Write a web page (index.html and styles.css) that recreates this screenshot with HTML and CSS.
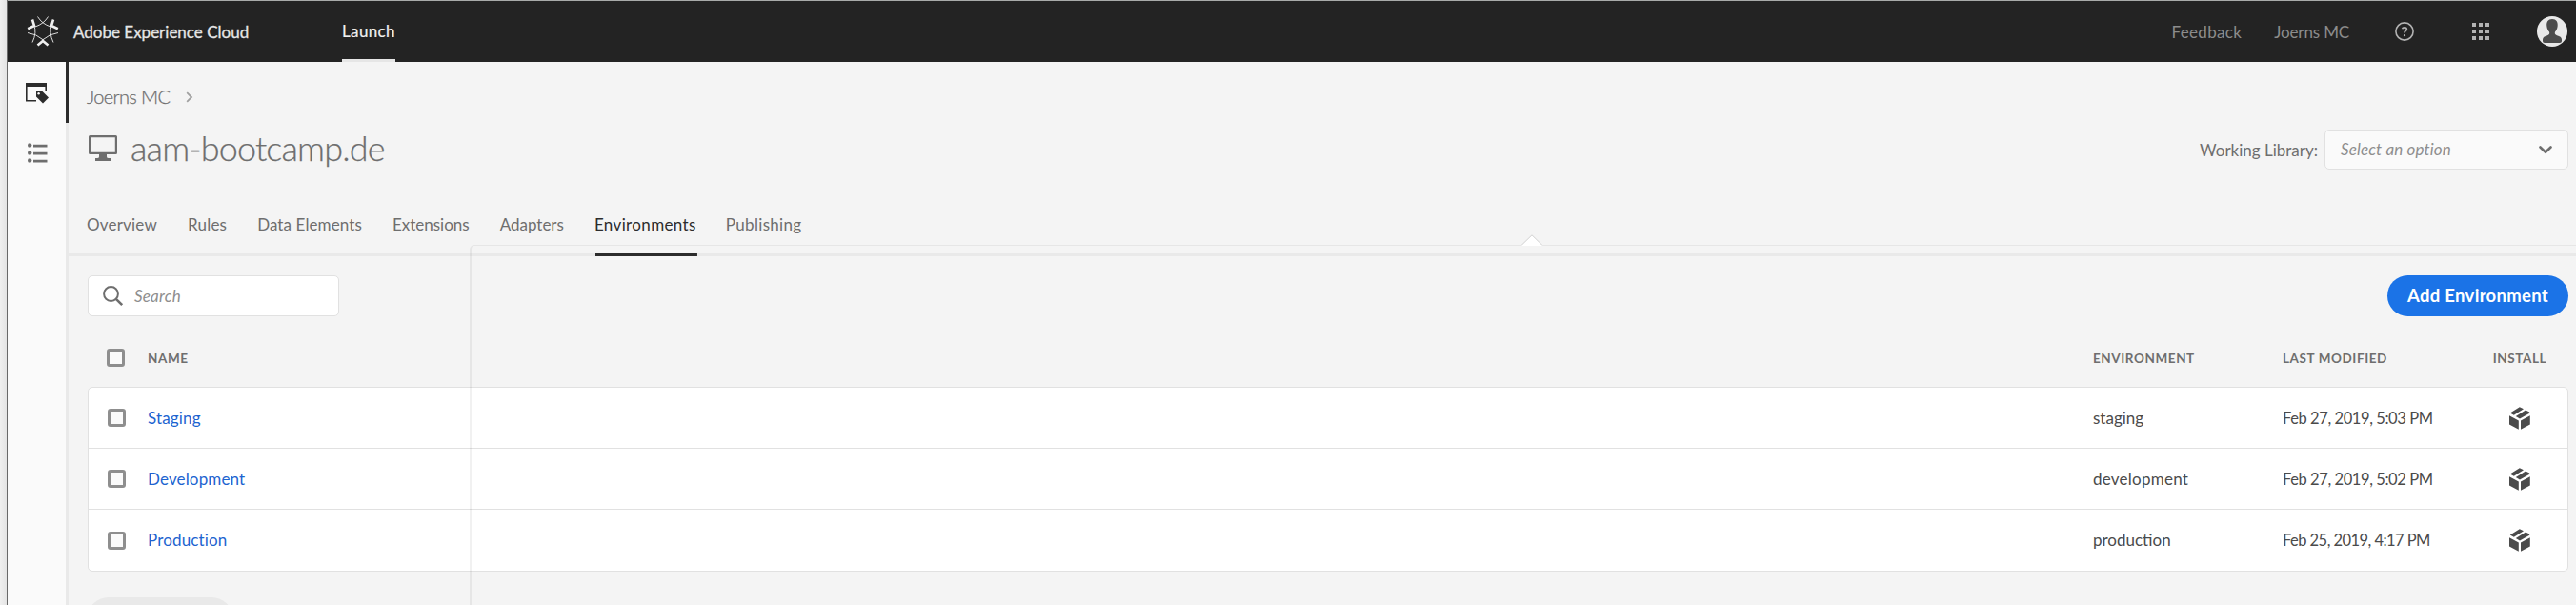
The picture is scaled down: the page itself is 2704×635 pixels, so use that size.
FILE: index.html
```html
<!DOCTYPE html>
<html lang="en">
<head>
<meta charset="utf-8">
<title>aam-bootcamp.de - Environments</title>
<link rel="stylesheet" href="styles.css">
</head>
<body>
<svg width="0" height="0" class="defs" aria-hidden="true">
  <symbol id="package" viewBox="0 0 22 24">
    <path d="M0 9.2 9.8 14.4V23.8L0 18.6ZM21.8 9.2 12 14.4V23.8L21.8 18.6Z"/>
    <path d="M0.8 6.6 10.8 .2 15 2.2 4.8 8.7ZM6.800 9.900 17.100 3.400 21.200 5.500V6.800L11 12.400Z"/>
  </symbol>
</svg>
<div class="frame">
  <div class="gutter"></div>
  <div class="app">
    <header class="topbar">
      <svg class="logo" width="34" height="34" viewBox="0 0 34 34" fill="none" stroke="#eee">
        <g stroke-width=".9">
          <path d="M11.500 1.500Q16 9 25 12M22.500 1.500Q18 9 9 12M7.500 10Q11 18 6 28.500M26.500 10Q23 18 28 28.500M1 18.500Q10 19.500 17.500 26M33 18.500Q24 19.500 16.500 26"/>
        </g>
        <path d="M6 4.500 8 11 1.200 14.200M28 4.500 26 11 32.800 14.200M11.500 31.500 17 27 22.500 31.500" stroke-width="2.600"/>
      </svg>
      <span class="brand">Adobe Experience Cloud</span>
      <span class="product">Launch</span>
      <span class="feedback">Feedback</span>
      <span class="org">Joerns MC</span>
      <svg class="help" width="20" height="20" viewBox="0 0 20 20" fill="none" stroke="#b3b3b3">
        <circle cx="10" cy="10" r="9.100" stroke-width="1.600"/>
        <path d="M7.600 7.300C8 5.700 12.400 5.200 12.300 7.600 12.200 9.300 10 9.400 10 11.600" stroke-width="1.800"/>
        <circle cx="10" cy="14.200" r="1.150" fill="#b3b3b3" stroke="none"/>
      </svg>
      <svg class="switcher" width="18" height="18" viewBox="0 0 18 18" fill="#b3b3b3">
        <path d="M0 0h4v4H0zM7 0h4v4H7zM14 0h4v4h-4zM0 7h4v4H0zM7 7h4v4H7zM14 7h4v4h-4zM0 14h4v4H0zM7 14h4v4H7zM14 14h4v4h-4z"/>
      </svg>
      <svg class="avatar" width="32" height="32" viewBox="0 0 32 32">
        <circle cx="16" cy="16" r="16" fill="#e8e8e8"/>
        <path d="M16 3C11.700 3 10 6 10.300 10 10.500 13.500 12 15 13 16.600 13.600 18.500 13 19.600 11 20.300 8 21.300 6 22 6 24.500V26.200Q6 28 8 28H24Q26 28 26 26.200V24.500C26 22 24 21.300 21 20.300 19 19.600 18.400 18.500 19 16.600 20 15 21.500 13.500 21.700 10 22 6 20.300 3 16 3Z" fill="#4b4b4b"/>
      </svg>
    </header>
    <div class="body">
      <nav class="sidebar">
        <div class="side-item active">
          <svg width="24" height="22" viewBox="0 0 24 22">
            <path d="M0 0H22V8H20.400V4H1.600V18H11V19.600H0Z" fill="#2c2c2c"/>
            <path d="M11.500 8.500H17L24 15.500 18 21.500 11 14.500V9Z" fill="#2c2c2c"/>
            <circle cx="13.600" cy="11.200" r="1.200" fill="#fafafa"/>
          </svg>
        </div>
        <div class="side-item">
          <svg width="21" height="22" viewBox="0 0 21 22" fill="#6e6e6e">
            <circle cx="2.200" cy="2.500" r="2.200"/><circle cx="2.200" cy="10.500" r="2.200"/><circle cx="2.200" cy="18.500" r="2.200"/>
            <path d="M6 1.800H20.500V4.400H6ZM6 9.800H20.500V12.400H6ZM6 17.800H20.500V20.400H6Z"/>
          </svg>
        </div>
      </nav>
      <main class="content">
        <div class="crumbs">
          <span class="crumb">Joerns MC</span>
          <svg width="8" height="12" viewBox="0 0 8 12" fill="none" stroke="#a0a0a0" stroke-width="1.800"><path d="M1.200 1.200 6 6 1.200 10.800"/></svg>
        </div>
        <div class="title-row">
          <svg class="monitor" width="30" height="27" viewBox="0 0 30 27" fill="#6e6e6e">
            <path fill-rule="evenodd" d="M1.500 0H28.500Q30 0 30 1.500V18.500Q30 20 28.500 20H19V22.500Q19 24 21 24H23V27H7V24H9Q11 24 11 22.500V20H1.500Q0 20 0 18.500V1.500Q0 0 1.500 0ZM2.200 2.200V17.800H27.800V2.200Z"/>
          </svg>
          <h1 class="title">aam-bootcamp.de</h1>
          <span class="library-label">Working Library:</span>
          <div class="select">
            <span>Select an option</span>
            <svg width="14" height="9" viewBox="0 0 14 9" fill="none" stroke="#6e6e6e" stroke-width="2.600" stroke-linecap="round" stroke-linejoin="round"><path d="M1.500 1.500 7 6.800 12.500 1.500"/></svg>
          </div>
        </div>
        <div class="tabs">
          <span class="tab">Overview</span><span class="tab">Rules</span><span class="tab snug">Data Elements</span><span class="tab tight">Extensions</span><span class="tab tight">Adapters</span><span class="tab selected">Environments</span><span class="tab wide">Publishing</span>
        </div>
        <div class="toolbar">
          <div class="search">
            <svg width="22" height="22" viewBox="0 0 22 22" fill="none" stroke="#6e6e6e"><circle cx="8.500" cy="8.500" r="7.400" stroke-width="2"/><path d="M13.800 13.800 20.200 20.200" stroke-width="2.600"/></svg>
            <span>Search</span>
          </div>
          <button class="add">Add Environment</button>
        </div>
        <div class="grid head">
          <i class="check"></i><span>NAME</span><span>ENVIRONMENT</span><span>LAST MODIFIED</span><span class="center">INSTALL</span>
        </div>
        <div class="table">
          <div class="grid row">
            <i class="check"></i><a class="link">Staging</a><span>staging</span><span class="date">Feb 27, 2019, 5:03 PM</span><svg class="pkg" width="22" height="24"><use href="#package"/></svg>
          </div>
          <div class="grid row">
            <i class="check"></i><a class="link">Development</a><span class="loose">development</span><span class="date">Feb 27, 2019, 5:02 PM</span><svg class="pkg" width="22" height="24"><use href="#package"/></svg>
          </div>
          <div class="grid row">
            <i class="check"></i><a class="link">Production</a><span>production</span><span class="date narrow">Feb 25, 2019, 4:17 PM</span><svg class="pkg" width="22" height="24"><use href="#package"/></svg>
          </div>
        </div>
        <div class="pill"></div>
      </main>
    </div>
  </div>
  <div class="popover"></div>
  <svg class="popover-tip" width="24" height="12" viewBox="0 0 24 12"><path d="M1 11.500 12 .8 23 11.500" fill="#fff" stroke="#d0d0d0"/><path d="M1.500 11H22.500V12H1.500Z" fill="#fff"/></svg>
</div>
</body>
</html>
```
FILE: styles.css
```css
* { box-sizing: border-box; }
body {
  margin: 0;
  font: 17px/24px Lato, "Open Sans", sans-serif;
  color: #4b4b4b;
  background: #f4f4f4;
}
.defs { position: absolute; }
svg { flex: none; display: block; }

.frame { position: relative; display: flex; height: 635px; overflow: hidden; }
.gutter {
  flex: none;
  width: 8px;
  background: linear-gradient(90deg, #f0f0f0, #e4e4e4);
  border-right: 1px solid #696969;
}
.app { flex: 1; display: flex; flex-direction: column; border-top: 1px solid #a8aaa9; }

/* Top bar */
.topbar {
  flex: none;
  display: flex;
  align-items: center;
  height: 64px;
  padding: 0 9px 0 20px;
  background: #232323;
  color: #8c8c8c;
}
.brand { width: 282px; margin: 1px 0 0 15px; color: #e6e6e6; -webkit-text-stroke: .3px #e6e6e6; white-space: nowrap; }
.product {
  height: 64px;
  line-height: 63px;
  letter-spacing: .37px;
  color: #f0f0f0;
  border-bottom: 3px solid #e6e6e6;
  -webkit-text-stroke: .2px #f0f0f0;
}
.feedback { margin: 1px 0 0 auto; letter-spacing: .35px; }
.org { margin: 1px 0 0 34px; letter-spacing: -.15px; }
.help { margin-left: 48px; }
.switcher { margin-left: 61px; }
.avatar { margin-left: 50px; }

/* Shell */
.body { flex: 1; display: flex; min-height: 0; }
.sidebar { flex: none; width: 64px; background: #fafafa; border-right: 3px solid #e9e9e9; }
.side-item { display: flex; align-items: center; height: 64px; padding-left: 21px; }
.side-item.active { margin-right: -3px; border-right: 3px solid #2c2c2c; }
.side-item.active svg { margin: 2px 0 0 -2px; }
.content { flex: 1; min-width: 0; padding: 0 8px 0 20px; }

/* Heading */
.crumbs { display: flex; align-items: center; height: 70px; color: #6e6e6e; }
.crumb { width: 104px; margin: 2px 0 0 -1px; font-size: 20px; font-weight: 300; letter-spacing: -.65px; -webkit-text-stroke: .25px #6e6e6e; }
.crumbs svg { margin-top: 4px; }
.title-row { display: flex; align-items: flex-start; height: 44px; color: #6e6e6e; }
.monitor { margin: 7px 14px 0 1px; }
.title { margin: 0 auto 0 0; font-size: 36px; line-height: 40px; font-weight: 300; letter-spacing: -.85px; -webkit-text-stroke: .25px #6e6e6e; }
.library-label { line-height: 45px; }
.select {
  display: flex;
  align-items: center;
  justify-content: space-between;
  width: 256px;
  height: 42px;
  margin: 1px 0 0 7px;
  padding: 0 16px;
  font-style: italic;
  letter-spacing: .15px;
  color: #8e8e8e;
  background: #fafafa;
  border: 1px solid #e1e1e1;
  border-radius: 5px;
}

/* Tabs */
.tabs {
  display: flex;
  gap: 32px;
  height: 67px;
  margin: 23px -8px 0 -20px;
  padding-left: 20px;
  line-height: 67px;
  color: #6e6e6e;
  box-shadow: inset 0 -3px #e9e9e9;
}
.tab { letter-spacing: .2px; text-indent: -1px; }
.tab.snug { letter-spacing: .1px; }
.tab.tight { letter-spacing: 0; }
.tab.wide { letter-spacing: .32px; }
.tab.selected {
  margin-right: -1px;
  padding-right: 1px;
  color: #2c2c2c;
  letter-spacing: .37px;
  background: linear-gradient(#2c2c2c, #2c2c2c) bottom / 100% 3px no-repeat;
}
.tab:not(.selected) { margin-right: 1px; }

/* Toolbar */
.toolbar { display: flex; justify-content: space-between; padding-top: 20px; }
.search {
  display: flex;
  align-items: center;
  gap: 11px;
  width: 264px;
  height: 43px;
  padding-left: 15px;
  font-style: italic;
  letter-spacing: .2px;
  color: #8e8e8e;
  background: #fff;
  border: 1px solid #e1e1e1;
  border-radius: 5px;
}
.add {
  width: 190px;
  height: 43px;
  padding: 0;
  font: bold 18.5px/43px Lato, "Open Sans", sans-serif;
  letter-spacing: .3px;
  color: #fff;
  background: #1b73e7;
  border: 0;
  border-radius: 22px;
}

/* Table */
.grid { display: grid; align-items: center; padding-left: 20px; }
.head {
  grid-template-columns: 43px 1fr 199px 198px 102px;
  height: 61px;
  margin-top: 13px;
  font-size: 13.5px;
  font-weight: bold;
  letter-spacing: .58px;
  color: #6e6e6e;
}
.check { width: 19px; height: 19px; border: 3px solid #8e8e8e; border-radius: 3px; background: #fafafa; }
.table { background: #fff; border: 1px solid #e1e1e1; border-radius: 5px; }
.row { grid-template-columns: 42px 1fr 199px 198px 101px; height: 64px; border-bottom: 1px solid #e1e1e1; }
.row:last-child { border-bottom: 0; }
.link { color: #1d64d0; letter-spacing: .15px; }
.loose { letter-spacing: .25px; }
.date { font-size: 16.5px; letter-spacing: -.42px; }
.date.narrow { letter-spacing: -.55px; }
.center { text-align: center; }
.pkg { justify-self: center; fill: #4b4b4b; }
.pill { width: 152px; height: 43px; margin-top: 27px; border-radius: 22px; background: #e9e9e9; }

/* Popover outline floating over the page */
.popover {
  position: absolute;
  left: 493px;
  top: 257px;
  right: -10px;
  bottom: -10px;
  border: 1px solid rgba(0, 0, 0, .055);
  border-left-width: 2px;
  border-radius: 5px 0 0 0;
}
.popover-tip { position: absolute; left: 1596px; top: 246px; }
```
